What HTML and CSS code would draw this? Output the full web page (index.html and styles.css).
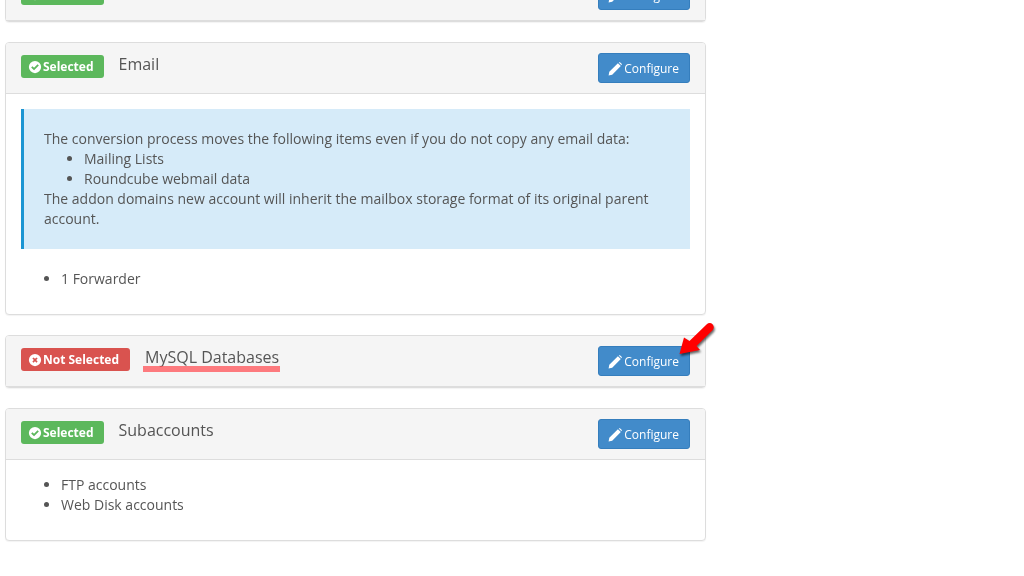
FILE: index.html
```html
<!DOCTYPE html>
<html lang="en">
<head>
<meta charset="utf-8">
<title>Convert addon domain</title>
<link rel="stylesheet" href="styles.css">
</head>
<body>
<svg width="0" height="0" class="defs" aria-hidden="true">
  <symbol id="i-check" viewBox="0 0 16 16"><path fill-rule="evenodd" d="M8 1a7 7 0 1 0 0 14A7 7 0 0 0 8 1zM6.900 11.800 3.600 8.500l1.500-1.500 1.800 1.800 4-4 1.500 1.500z"/></symbol>
  <symbol id="i-times" viewBox="0 0 16 16"><path fill-rule="evenodd" d="M8 1a7 7 0 1 0 0 14A7 7 0 0 0 8 1zM11 9.700 9.700 11 8 9.300 6.300 11 5 9.700 6.700 8 5 6.300 6.300 5 8 6.700 9.700 5 11 6.300 9.300 8z"/></symbol>
  <symbol id="i-pencil" viewBox="0 0 14 14"><path d="M.6 13.400 1.300 9.800 9.900 1.200 12.800 4.100 4.200 12.700zM10.700.5l.7-.3c.3-.1.6 0 .8.200l1.400 1.400c.2.200.3.500.2.800l-.3.700z"/></symbol>
</svg>
<main class="page">
  <section class="panel">
    <header class="head">
      <span class="badge ok"><svg class="bi"><use href="#i-check"/></svg>Selected</span>
      <h2 class="title">Addon</h2>
      <button class="btn"><svg class="pi"><use href="#i-pencil"/></svg>Configure</button>
    </header>
  </section>

  <section class="panel">
    <header class="head">
      <span class="badge ok"><svg class="bi"><use href="#i-check"/></svg>Selected</span>
      <h2 class="title">Email</h2>
      <button class="btn"><svg class="pi"><use href="#i-pencil"/></svg>Configure</button>
    </header>
    <div class="body">
      <div class="alert">
        The conversion process moves the following items even if you do not copy any email data:
        <ul class="alert-list">
          <li>Mailing Lists</li>
          <li>Roundcube webmail data</li>
        </ul>
        The addon domains new account will inherit the mailbox storage format of its original parent account.
      </div>
      <ul class="list">
        <li>1 Forwarder</li>
      </ul>
    </div>
  </section>

  <section class="panel">
    <header class="head">
      <span class="badge bad"><svg class="bi"><use href="#i-times"/></svg>Not Selected</span>
      <h2 class="title marked">MySQL Databases</h2>
      <button class="btn"><svg class="pi"><use href="#i-pencil"/></svg>Configure</button>
      <svg class="arrow" width="44" height="42" viewBox="0 0 44 42" aria-hidden="true">
        <path class="arrow-fill" d="M1.500 31 6 14.500l5.500 3.500L28.500 1.500c2-1.800 4.500-1.800 6-.2s1.900 4-.2 6.200L18.500 23l3.500 4z"/>
      </svg>
    </header>
  </section>

  <section class="panel">
    <header class="head">
      <span class="badge ok"><svg class="bi"><use href="#i-check"/></svg>Selected</span>
      <h2 class="title">Subaccounts</h2>
      <button class="btn"><svg class="pi"><use href="#i-pencil"/></svg>Configure</button>
    </header>
    <div class="body">
      <ul class="list">
        <li>FTP accounts</li>
        <li>Web Disk accounts</li>
      </ul>
    </div>
  </section>
</main>
</body>
</html>
```
FILE: styles.css
```css
* { box-sizing: border-box; }
html, body { margin: 0; padding: 0; height: 100%; overflow: hidden; background: #fff; }
body { font-family: "Open Sans", "Liberation Sans", sans-serif; font-size: 14px; line-height: 20px; color: #555; }
.defs { position: absolute; }
.page { width: 701px; margin: -31px 0 0 5px; will-change: transform; }
.panel { background: #fff; border: 1px solid #ddd; border-radius: 4px; box-shadow: 0 1px 1px rgba(0,0,0,.05); margin-bottom: 20px; }
.head { position: relative; display: flex; align-items: flex-start; height: 51px; padding: 10px 15px; background: #f5f5f5; border-bottom: 1px solid #ddd; border-radius: 3px 3px 0 0; }
.badge { display: inline-flex; align-items: center; height: 23px; margin-top: 2px; padding: 0 10px 0 7px; border-radius: 3px; color: #fff; font-size: 12px; font-weight: 700; white-space: nowrap; }
.ok { background: #5cb85c; }
.bad { background: #d9534f; padding-right: 11px; }
.bi { width: 14px; height: 14px; margin: 0 1px 0 0; fill: #fff; }
.title { position: relative; margin: 0 0 0 15px; font-size: 16px; font-weight: 400; line-height: 22px; color: #555; }
.marked::after { content: ""; position: absolute; left: -2px; right: -1px; top: 20px; height: 6px; background: rgba(255,80,85,.75); }
.btn { display: inline-flex; align-items: center; height: 30px; margin-left: auto; padding: 2px 10px 0 9px; background: #428bca; border: 1px solid #357ebd; border-radius: 3px; color: #fff; font: 400 12px/20px "Open Sans", "Liberation Sans", sans-serif; }
.pi { width: 14px; height: 14px; margin-right: 2px; fill: #fff; }
.arrow { position: absolute; left: 672px; top: -13px; overflow: visible; filter: drop-shadow(1px 2px 1px rgba(0,0,0,.6)); }
.arrow-fill { fill: #f00; }
.body { padding: 15px; }
.alert { margin-bottom: 20px; padding: 20px; background: #d6ebf9; border-left: 3px solid #1b95d3; }
.alert-list { margin: 0; padding-left: 40px; }
.list { margin: 0 0 10px; padding-left: 40px; }
```
